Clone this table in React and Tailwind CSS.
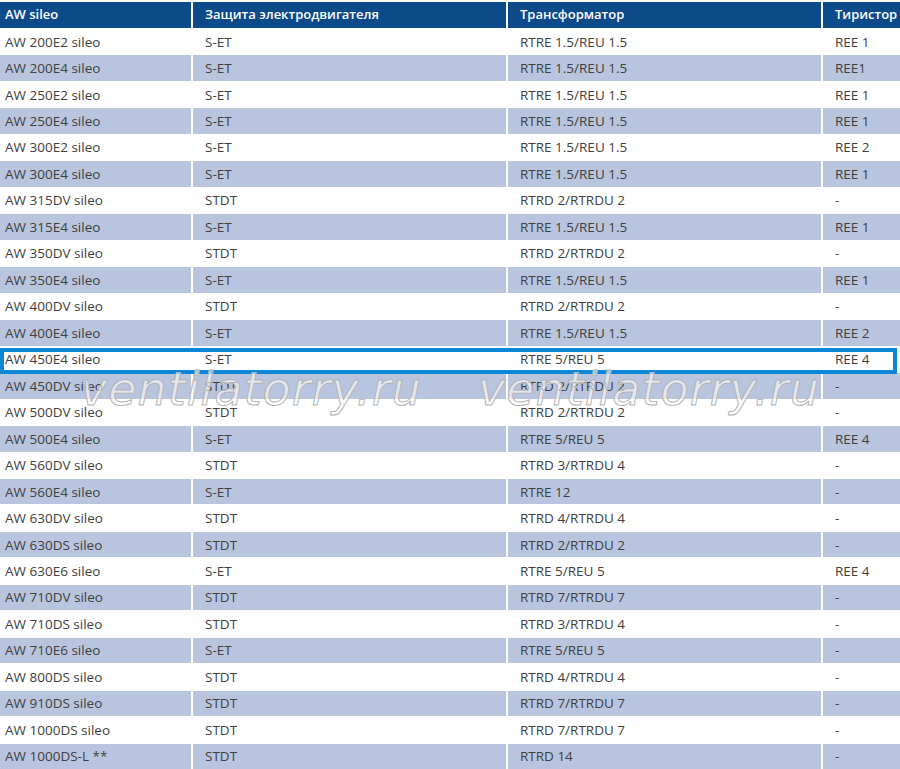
const rows = [
  ["AW 200E2 sileo", "S-ET", "RTRE 1.5/REU 1.5", "REE 1"],
  ["AW 200E4 sileo", "S-ET", "RTRE 1.5/REU 1.5", "REE1"],
  ["AW 250E2 sileo", "S-ET", "RTRE 1.5/REU 1.5", "REE 1"],
  ["AW 250E4 sileo", "S-ET", "RTRE 1.5/REU 1.5", "REE 1"],
  ["AW 300E2 sileo", "S-ET", "RTRE 1.5/REU 1.5", "REE 2"],
  ["AW 300E4 sileo", "S-ET", "RTRE 1.5/REU 1.5", "REE 1"],
  ["AW 315DV sileo", "STDT", "RTRD 2/RTRDU 2", "-"],
  ["AW 315E4 sileo", "S-ET", "RTRE 1.5/REU 1.5", "REE 1"],
  ["AW 350DV sileo", "STDT", "RTRD 2/RTRDU 2", "-"],
  ["AW 350E4 sileo", "S-ET", "RTRE 1.5/REU 1.5", "REE 1"],
  ["AW 400DV sileo", "STDT", "RTRD 2/RTRDU 2", "-"],
  ["AW 400E4 sileo", "S-ET", "RTRE 1.5/REU 1.5", "REE 2"],
  ["AW 450E4 sileo", "S-ET", "RTRE 5/REU 5", "REE 4"],
  ["AW 450DV sileo", "STDT", "RTRD 2/RTRDU 2", "-"],
  ["AW 500DV sileo", "STDT", "RTRD 2/RTRDU 2", "-"],
  ["AW 500E4 sileo", "S-ET", "RTRE 5/REU 5", "REE 4"],
  ["AW 560DV sileo", "STDT", "RTRD 3/RTRDU 4", "-"],
  ["AW 560E4 sileo", "S-ET", "RTRE 12", "-"],
  ["AW 630DV sileo", "STDT", "RTRD 4/RTRDU 4", "-"],
  ["AW 630DS sileo", "STDT", "RTRD 2/RTRDU 2", "-"],
  ["AW 630E6 sileo", "S-ET", "RTRE 5/REU 5", "REE 4"],
  ["AW 710DV sileo", "STDT", "RTRD 7/RTRDU 7", "-"],
  ["AW 710DS sileo", "STDT", "RTRD 3/RTRDU 4", "-"],
  ["AW 710E6 sileo", "S-ET", "RTRE 5/REU 5", "-"],
  ["AW 800DS sileo", "STDT", "RTRD 4/RTRDU 4", "-"],
  ["AW 910DS sileo", "STDT", "RTRD 7/RTRDU 7", "-"],
  ["AW 1000DS sileo", "STDT", "RTRD 7/RTRDU 7", "-"],
  ["AW 1000DS-L **", "STDT", "RTRD 14", "-"],
];

const cols = "grid grid-cols-[191px_313px_313px_1fr] gap-x-[2px]";

export default function App() {
  return (
    <div
      className="relative h-[769px] w-[900px] overflow-hidden bg-white pt-[2px]"
      style={{ fontFamily: '"Open Sans", "Noto Sans", sans-serif' }}
    >
      {/* header */}
      <div className={`${cols} h-[26px] text-[13px] font-semibold text-white`}>
        <div className="flex items-center bg-[#0c4a8a] pl-[5px]">AW sileo</div>
        <div className="flex items-center bg-[#0c4a8a] pl-[12px]">Защита электродвигателя</div>
        <div className="flex items-center bg-[#0c4a8a] pl-[12px]">Трансформатор</div>
        <div className="flex items-center bg-[#0c4a8a] pl-[12px]">Тиристор</div>
      </div>

      {/* body */}
      <div className="mt-[1px] flex h-[740px] flex-col gap-y-[1px] text-[13.5px] text-[#404040]">
        {rows.map((r, i) => {
          const bg = i % 2 === 1 ? "bg-[#b9c5de]" : "bg-white";
          return (
            <div key={r[0]} className={`${cols} relative flex-1`}>
              <div className={`flex items-center ${bg} pl-[5px]`}>{r[0]}</div>
              <div className={`flex items-center ${bg} pl-[12px]`}>{r[1]}</div>
              <div className={`flex items-center ${bg} pl-[12px]`}>{r[2]}</div>
              <div className={`flex items-center ${bg} pl-[12px]`}>{r[3]}</div>
              {i === 12 && (
                <div className="pointer-events-none absolute top-[1px] -bottom-[2px] left-0 right-[3px] z-10 shadow-[inset_0_0_0_4px_#0f85d8]" />
              )}
            </div>
          );
        })}
      </div>

      {/* watermark */}
      <div
        className="pointer-events-none absolute left-0 top-[366px] z-20 h-[56px] w-full text-[46px] italic leading-none tracking-[1px] text-white/60 [-webkit-text-stroke:1px_#b4b4b4]"
        style={{ fontFamily: '"DejaVu Sans", sans-serif' }}
      >
        <span className="absolute left-[80px] top-0">ventilatorry.ru</span>
        <span className="absolute left-[478px] top-0">ventilatorry.ru</span>
      </div>
    </div>
  );
}
